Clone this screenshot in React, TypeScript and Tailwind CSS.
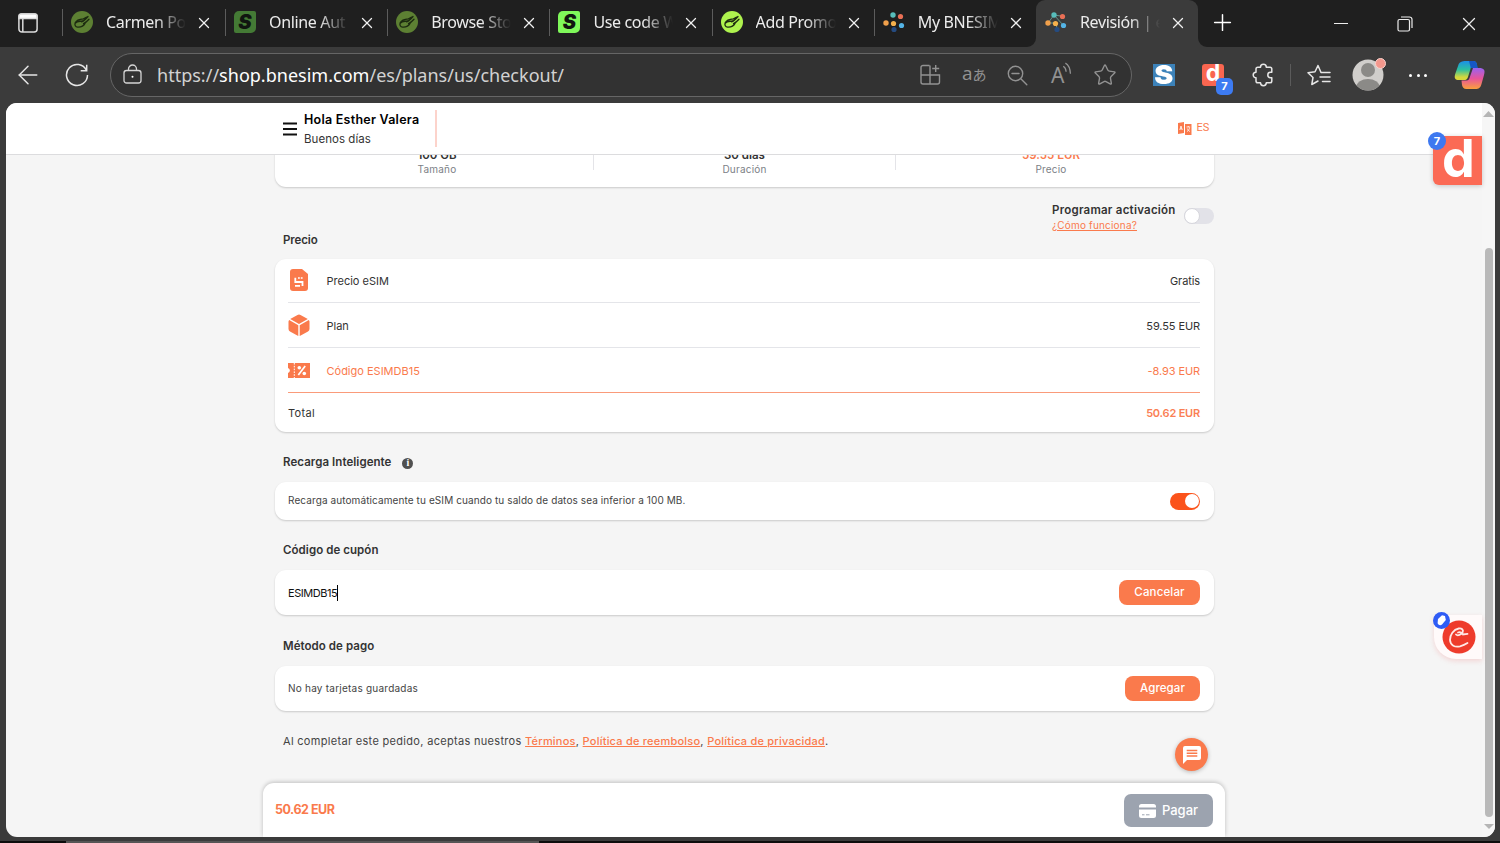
import type { ReactNode } from "react";
import { ArrowLeft, Plus, Star, X } from "lucide-react";

function LimeIcon({ color }: { color: string }) {
  return (
    <svg width="22" height="22" viewBox="0 0 22 22" fill="none" className="shrink-0">
      <circle cx="11" cy="11" r="11" fill={color} />
      <path
        d="M12.500 7.800c-3.800.3-7.200 1.400-8.300 3.900-.8 2.300.2 4.300 2.400 4.400 2.800.2 6.200-1.400 7.600-4M4.500 12c1.500-2 5-1.500 7-2.200M10.500 10.800c2.200-.6 4.200-2.600 6.500-5.300M12.500 12.500c2-.8 4-2.600 5.500-4.300M12.500 7.800l3.200-1.600"
        stroke="#1c2a10"
        strokeWidth="1.300"
        strokeLinecap="round"
      />
    </svg>
  );
}

function SIcon({ className }: { className: string }) {
  return (
    <span
      className={`flex h-[22px] w-[22px] shrink-0 items-center justify-center rounded-[2px] rounded-tl-[5px] rounded-br-[5px] font-['Inter',sans-serif] text-[20px] leading-none font-black text-[#101510] italic ${className}`}
    >
      S
    </span>
  );
}

function DotsIcon({ linked }: { linked?: boolean }) {
  return (
    <svg width="22" height="22" viewBox="0 0 22 22" className="shrink-0">
      {linked && (
        <path
          d="M9 4l9 1.300M9 4l-6 8h8M9 4l9.500 10.500M11 12l1 6"
          fill="none"
          stroke="#6fa7a0"
          strokeWidth="0.800"
        />
      )}
      <circle cx={linked ? 9 : 10} cy="4" r="2.700" fill="#57bdbb" />
      <circle cx="17.500" cy="5.500" r="2.600" fill="#e96f55" />
      <circle cx="3" cy="12" r="2.700" fill="#f0a04b" />
      <circle cx="10.500" cy="12.500" r="2.600" fill="#f5b04c" />
      <circle cx="18.500" cy="14.500" r="2.600" fill="#54b4e6" />
      <circle cx={linked ? 12 : 11} cy="18.500" r="2.600" fill="#254b80" />
    </svg>
  );
}

function Tab({
  icon,
  title,
  active,
}: {
  icon: ReactNode;
  title: string;
  active?: boolean;
}) {
  return (
    <div
      className={`relative flex h-[47px] w-[162.200px] shrink-0 items-center pb-[3px] first-of-type:w-[163px] ${active ? "rounded-t-[9px] bg-[#3b3b3b]" : ""}`}
    >
      {!active && <span className="-mr-px h-[27px] w-px bg-[#5c5c5c]" />}
      <span className="ml-[9px] flex">{icon}</span>
      <span className="ml-[13px] w-[80px] [mask-image:linear-gradient(to_right,black_62%,transparent)] text-[16px] tracking-[-0.350px] whitespace-nowrap text-[#ececec]">
        {title}
      </span>
      <X size={18} strokeWidth={1.700} className="mt-[2px] ml-[9px] shrink-0 text-[#f0f0f0]" />
      {active && (
        <>
          <svg width="9" height="9" className="absolute bottom-0 -left-[9px]">
            <path d="M9 0v9H0a9 9 0 0 0 9-9" fill="#3b3b3b" />
          </svg>
          <svg width="9" height="9" className="absolute -right-[9px] bottom-0">
            <path d="M0 0v9h9a9 9 0 0 1-9-9" fill="#3b3b3b" />
          </svg>
        </>
      )}
    </div>
  );
}

function TabStrip() {
  return (
    <div className="flex h-[47px] bg-[#1f1f1f]">
      <span className="flex w-[62px] items-center pl-[18px]">
        <svg width="20" height="20" viewBox="0 0 20 20" fill="none" stroke="#dcdcdc" strokeWidth="1.500" className="-mt-[2px]">
          <rect x="0.900" y="0.900" width="18.200" height="18.200" rx="3" />
          <path d="M1 3a2 2 0 0 1 2-2h14a2 2 0 0 1 2 2v2.500H1z" fill="#fff" />
          <path d="M4.800 6v13" />
        </svg>
      </span>
      <Tab icon={<LimeIcon color="#5d8033" />} title="Carmen Po" />
      <Tab icon={<SIcon className="bg-[#447a35]" />} title="Online Aut" />
      <Tab icon={<LimeIcon color="#5d8033" />} title="Browse Sto" />
      <Tab icon={<SIcon className="bg-[#7ff85a]" />} title="Use code W" />
      <Tab icon={<LimeIcon color="#aef24e" />} title="Add Promo" />
      <Tab icon={<DotsIcon />} title="My BNESIM" />
      <Tab icon={<DotsIcon linked />} title="Revisión | e" active />
      <Plus size={27} strokeWidth={1.300} className="mt-[9px] ml-[11px] text-white" />
      <div className="ml-auto flex items-center text-[#ededed]">
        <span className="mr-[49px] h-px w-[14px] bg-[#ededed]" />
        <svg width="16" height="16" viewBox="0 0 16 16" fill="none" stroke="currentColor" strokeWidth="1.200" className="mr-[45px]">
          <rect x="1" y="3.500" width="11.500" height="11.500" rx="1.500" />
          <path d="M4 1h8.500A2.500 2.500 0 0 1 15 3.500V12" />
        </svg>
        <X size={22} strokeWidth={1.400} className="mr-[20px]" />
      </div>
    </div>
  );
}

function AddressBar() {
  return (
    <div className="flex h-[44px] w-[1022px] items-center rounded-full border border-[#666] bg-[#323232] pr-[14px] pl-[12px] text-[#929292]">
      <svg width="19" height="20" viewBox="0 0 19 20" fill="none" stroke="#d5d5d5" strokeWidth="1.300" className="-mt-[2px]">
        <rect x="1" y="6.500" width="17" height="12.500" rx="2.500" />
        <path d="M5.500 6.500V5a4 4 0 0 1 8 0v1.500" />
        <circle cx="9.500" cy="12.700" r="1" fill="#fff" stroke="none" />
      </svg>
      <span className="ml-[15px] text-[18px] tracking-[0.010px] whitespace-nowrap text-[#d2d2d2]">
        https://<span className="text-white">shop.bnesim.com</span>/es/plans/us/checkout/
      </span>
      <div className="ml-auto flex items-center">
        <svg width="21" height="21" viewBox="0 0 21 21" fill="none" stroke="currentColor" strokeWidth="1.400" className="-mt-px">
          <path d="M9.500 1.500H3a2 2 0 0 0-2 2V18a2 2 0 0 0 2 2h14.500a2 2 0 0 0 2-2v-7H1M10 1.500V20M15.700 1v7M12.200 4.500h7" />
        </svg>
        <span className="-mt-[3px] ml-[21px] flex w-[24px] items-baseline font-['Open_Sans','Noto_Sans_CJK_JP',sans-serif]">
          <span className="text-[19px] leading-none">a</span>
          <span className="text-[14px] leading-none">あ</span>
        </span>
        <svg width="21" height="21" viewBox="0 0 21 21" fill="none" stroke="currentColor" strokeWidth="1.400" className="ml-[21px]">
          <circle cx="8.500" cy="8.500" r="7.200" />
          <path d="M13.800 13.800l6 6M5 8.500h7" strokeLinecap="round" />
        </svg>
        <span className="ml-[23px] flex w-[22px]">
          <span className="text-[21px] leading-[24px]">A</span>
          <svg width="10" height="14" viewBox="0 0 9 13" fill="none" stroke="currentColor" strokeWidth="1.200" className="-mt-px -ml-[2px] shrink-0">
            <path d="M1 4c1.700 1 2.500 2.500 2.700 5M3 1c3 1.700 4.500 5 4.700 10" />
          </svg>
        </span>
        <Star size={24} strokeWidth={1.400} className="ml-[20px]" />
      </div>
    </div>
  );
}

function Toolbar() {
  return (
    <div className="flex h-[56px] items-center bg-[#3b3b3b] text-[#e6e6e6]">
      <ArrowLeft size={30} strokeWidth={1.200} className="ml-[13px]" />
      <svg width="24" height="24" viewBox="0 0 24 24" fill="none" stroke="currentColor" strokeWidth="1.500" className="ml-[22px]">
        <path d="M21.500 7.500A10.500 10.500 0 1 0 22.500 12M21.700 1.800v6h-6" />
      </svg>
      <div className="ml-[21px]">
        <AddressBar />
      </div>
      <span className="ml-[21px] flex h-[22px] w-[22px] items-center justify-center bg-[#3c82b9] font-['Inter',sans-serif] text-[26px] leading-none font-black text-white">
        <span className="scale-x-110">S</span>
      </span>
      <span className="relative ml-[27px] flex h-[22px] w-[22px] items-center justify-center rounded-[3px] bg-[#f96650] pb-[3px] font-['Inter',sans-serif] text-[23px] leading-none font-bold text-white">
        d
        <span className="absolute top-[14px] left-[14px] flex h-[17px] w-[17px] items-center justify-center rounded-[5px] bg-[#3d7bf2] text-[11px] font-bold">
          7
        </span>
      </span>
      <svg width="22" height="24" viewBox="0 0 22 24" fill="none" stroke="currentColor" strokeWidth="1.500" strokeLinejoin="round" className="ml-[28px]">
        <path d="M8.500 4.200a2.900 2.900 0 0 1 5.800 0H18a1.800 1.800 0 0 1 1.800 1.800v3.300h-1.300a2.700 2.700 0 0 0 0 5.400h1.300V18a1.800 1.800 0 0 1-1.800 1.800h-3.700a2.900 2.900 0 0 1-5.800 0H5.800A1.800 1.800 0 0 1 4 18v-3.200a2.800 2.800 0 0 1 0-5.600V6a1.800 1.800 0 0 1 1.800-1.800z" />
      </svg>
      <span className="ml-[16px] h-[22px] w-px bg-[#5b5b5b]" />
      <svg width="24" height="22" viewBox="0 0 24 22" fill="none" stroke="currentColor" strokeWidth="1.500" strokeLinejoin="round" strokeLinecap="round" className="ml-[16px]">
        <path d="M14 8.500l-3-7-3 6.300-7 .9 5 4.800-1.200 7L11 17" />
        <path d="M14.500 8.500h8.500M13 13h10M15.500 17.500H23" />
      </svg>
      <span className="relative ml-[21px]">
        <svg width="32" height="32" viewBox="0 0 32 32">
          <clipPath id="avatar">
            <circle cx="16" cy="16" r="15.500" />
          </clipPath>
          <g clipPath="url(#avatar)">
            <rect width="32" height="32" fill="#d0cecb" />
            <circle cx="16" cy="11" r="7" fill="#8b8a87" />
            <ellipse cx="16" cy="27.500" rx="11.500" ry="7.500" fill="#8b8a87" />
          </g>
        </svg>
        <span className="absolute -top-px -right-[2px] h-[11px] w-[11px] rounded-full border border-[#fbd2cc] bg-[#f3978c]" />
      </span>
      <span className="ml-[25px] flex gap-[4.500px]">
        <i className="h-[3px] w-[3px] rounded-full bg-white" />
        <i className="h-[3px] w-[3px] rounded-full bg-white" />
        <i className="h-[3px] w-[3px] rounded-full bg-white" />
      </span>
      <svg width="32" height="30" viewBox="0 0 32 30" className="ml-[27px]">
        <defs>
          <linearGradient id="copilotLeft" x1="0" y1="0" x2="0" y2="1">
            <stop offset="0" stopColor="#1b8fe8" />
            <stop offset="0.450" stopColor="#2cc0a0" />
            <stop offset="0.850" stopColor="#d6d83c" />
          </linearGradient>
          <linearGradient id="copilotRight" x1="0" y1="0" x2="0" y2="1">
            <stop offset="0" stopColor="#9a62f0" />
            <stop offset="0.500" stopColor="#e8549b" />
            <stop offset="1" stopColor="#f9a03c" />
          </linearGradient>
        </defs>
        <path d="M19 8h6c5 0 6.500 2 5 7l-2.500 9c-1 4-3 5-6 5h-9c-3 0-4-2-4.500-4l-.5-4.500h5c2 0 2.600-1 3.200-3z" fill="url(#copilotRight)" />
        <path d="M12 1h7c3 0 3.700 2 4.200 4.500H20c-2 0-2.800 1-3.400 3L14 17c-.8 2.500-2 3-4 3H5c-4 0-5-2-3.800-6l3-8.500C5.200 2 8 1 12 1z" fill="url(#copilotLeft)" />
        <path d="M15 1h4c3 0 3.700 2 4.200 4.500l.8 2.500h-7.200z" fill="#1657c5" />
      </svg>
    </div>
  );
}

function SiteHeader() {
  return (
    <header className="relative flex h-[52px] shrink-0 border-b border-[#dcdcde] bg-white pl-[277px]">
      <svg width="14" height="14" viewBox="0 0 14 14" stroke="#111" strokeWidth="2.200" className="mt-[19px]">
        <path d="M0 1.500h14M0 7h14M0 12.500h14" />
      </svg>
      <div className="ml-[7px] w-[131px] pt-[7px]">
        <p className="text-[12.500px] leading-[19px] font-semibold tracking-[0.250px] whitespace-nowrap text-black">Hola Esther Valera</p>
        <p className="pt-px text-[11.500px] leading-[18px] tracking-[0.050px] text-[#333]">Buenos días</p>
      </div>
      <span className="mt-[7px] h-[37px] w-[1.500px] bg-[#fcd3cb]" />
      <div className="mt-[17px] ml-[741px] flex h-[16px] items-center gap-[5px] text-[#fa7a4c]">
        <svg width="14" height="13" viewBox="0 0 14 13">
          <path d="M0 1l6-1v11l-6 1zM7 2h6.500v11H7z" fill="currentColor" />
          <path d="M1.800 8L3 4l1.300 4M2.200 6.800h1.800M8.500 5h3.700M10.300 4v1M9 9.500c1.500-.8 2.300-2 2.500-4M9.300 6.500c.5 1.500 1.500 2.500 2.700 3" stroke="#fff" strokeWidth="0.800" fill="none" />
        </svg>
        <span className="pt-px font-['Roboto',sans-serif] text-[11px]">ES</span>
      </div>
    </header>
  );
}

function Card({ className, children }: { className: string; children: ReactNode }) {
  return (
    <div className={`w-[939px] shrink-0 rounded-[11px] bg-white shadow-[0_1px_2px_rgba(0,0,0,0.180)] ${className}`}>
      {children}
    </div>
  );
}

function Label({ children }: { children: ReactNode }) {
  return (
    <h2 className="flex h-[50px] shrink-0 items-center pt-[12px] pl-[8px] text-[11.500px] font-semibold tracking-[0.060px] text-[#333]">
      {children}
    </h2>
  );
}

function Stat({ value, name, className }: { value: string; name: string; className: string }) {
  return (
    <div className={`flex flex-col items-center ${className}`}>
      <span className="text-[11.500px] leading-[14px] font-semibold">{value}</span>
      <span className="text-[10px] leading-[14px] tracking-[0.200px] text-[#7c7f86]">{name}</span>
    </div>
  );
}

function PriceRow({
  icon,
  name,
  value,
  className,
}: {
  icon: ReactNode;
  name: string;
  value: string;
  className: string;
}) {
  return (
    <div className={`flex items-center border-b text-[11px] ${className}`}>
      <span className="flex w-[38.500px]">{icon}</span>
      <span className="pt-[2px]">{name}</span>
      <span className="ml-auto pt-[2px] tracking-[-0.100px]">{value}</span>
    </div>
  );
}

function SimIcon() {
  return (
    <svg width="22" height="22" viewBox="0 0 22 22" className="-mt-px">
      <path d="M5 0h9l6 5v14a3 3 0 0 1-3 3H5a3 3 0 0 1-3-3V3a3 3 0 0 1 3-3z" fill="#fa7a4c" />
      <path d="M7.300 8.800v4.200h7.200v4M7 16.800h5" stroke="#fff" strokeWidth="1.800" fill="none" />
      <path d="M10 9h5.500" stroke="#fff" strokeWidth="1.700" strokeDasharray="1.800 1" />
    </svg>
  );
}

function BoxIcon() {
  return (
    <svg width="22" height="22" viewBox="0 0 22 22" fill="#fa7a4c">
      <path d="M9.500.9a3 3 0 0 1 3 0l7.300 4.200L11 10 2.200 5.100z" />
      <path d="M1.200 6.100l9.100 5.100V22a3 3 0 0 1-1-.4L2 17.400A3 3 0 0 1 .5 15V7.500a3 3 0 0 1 .7-1.400z" />
      <path d="M20.800 6.100l-9.100 5.100V22a3 3 0 0 0 1-.4l7.300-4.200a3 3 0 0 0 1.500-2.400V7.500a3 3 0 0 0-.7-1.400z" />
    </svg>
  );
}

function CouponIcon() {
  return (
    <svg width="22" height="15" viewBox="0 0 22 15">
      <path d="M0 0h22v15H0V10a2.600 2.600 0 0 0 0-5z" fill="#fa7a4c" />
      <path d="M6.300 0v15" stroke="#fff" strokeDasharray="1.600 1.200" />
      <path d="M10.300 12L17.200 3" stroke="#fff" strokeWidth="1.700" />
      <circle cx="11.300" cy="4.700" r="1.800" fill="#fff" />
      <circle cx="16.300" cy="10.500" r="1.800" fill="#fff" />
    </svg>
  );
}

function Checkout() {
  return (
    <main className="flex min-h-0 flex-1 flex-col overflow-hidden pl-[269px]">
      <Card className="-mt-[20px] flex h-[52px] px-[6px] pt-[13px] text-[#333]">
        <Stat value="100 GB" name="Tamaño" className="w-[312px]" />
        <span className="h-[22px] w-px bg-[#e4e4e8]" />
        <Stat value="30 días" name="Duración" className="w-[301px]" />
        <span className="h-[22px] w-px bg-[#e4e4e8]" />
        <Stat value="59.55 EUR" name="Precio" className="w-[310px] text-[#fa7a4c]" />
      </Card>

      <div className="flex h-[72px] w-[939px] shrink-0 justify-between">
        <h2 className="self-end pb-[10px] pl-[8px] text-[11.500px] leading-[18px] font-semibold tracking-[-0.100px] text-[#333]">Precio</h2>
        <div className="flex pt-[15px]">
          <div className="w-[132px]">
            <p className="pt-px text-[11.500px] leading-[15px] font-semibold tracking-[0.240px] whitespace-nowrap text-[#333]">Programar activación</p>
            <p className="text-[10px] leading-[14px] tracking-[0.180px] text-[#fa7a4c] underline">¿Cómo funciona?</p>
          </div>
          <span className="mt-[6px] flex h-[16px] w-[30px] rounded-full bg-[#e2e2e8]">
            <i className="h-[16px] w-[16px] rounded-full border border-[#d6d6dc] bg-white" />
          </span>
        </div>
      </div>

      <Card className="h-[173px] pr-[14px] pl-[13px] text-[#333]">
        <PriceRow icon={<SimIcon />} name="Precio eSIM" value="Gratis" className="h-[44px] border-[#e4e5e9]" />
        <PriceRow icon={<BoxIcon />} name="Plan" value="59.55 EUR" className="h-[45px] border-[#e4e5e9]" />
        <PriceRow
          icon={<CouponIcon />}
          name="Código ESIMDB15"
          value="-8.93 EUR"
          className="h-[45px] border-[#fa9b7a] text-[#fa7a4c]"
        />
        <div className="flex h-[39px] items-center justify-between pt-[2px] text-[11px]">
          <span className="tracking-[0.350px]">Total</span>
          <span className="font-semibold tracking-[-0.200px] text-[#fa7f55]">50.62 EUR</span>
        </div>
      </Card>

      <Label>
        Recarga Inteligente
        <span className="ml-[11px] flex h-[11px] w-[11px] items-center justify-center rounded-full bg-[#505050] font-['Liberation_Serif',serif] text-[10px] leading-none font-bold text-white">
          i
        </span>
      </Label>
      <Card className="flex h-[38px] items-center justify-between px-[13px] pr-[14px]">
        <span className="pb-[2px] text-[10px] tracking-[0.100px] whitespace-nowrap text-[#444]">
          Recarga automáticamente tu eSIM cuando tu saldo de datos sea inferior a 100 MB.
        </span>
        <span className="flex h-[17px] w-[30px] justify-end rounded-full bg-[#fb531b] p-[1.500px]">
          <i className="h-[14px] w-[14px] rounded-full bg-white" />
        </span>
      </Card>

      <Label>Código de cupón</Label>
      <Card className="flex h-[45px] items-center justify-between px-[13px] pr-[14px]">
        <span className="flex items-center pt-px text-[11px] tracking-[-0.450px] text-[#111]">
          ESIMDB15
          <i className="h-[16px] w-px bg-black" />
        </span>
        <button className="h-[25px] w-[81px] rounded-[8px] bg-[#fa7a4c] pt-px text-[11.500px] font-medium tracking-[0.150px] text-white">Cancelar</button>
      </Card>

      <Label>
        <span className="pt-px">Método de pago</span>
      </Label>
      <Card className="mt-px flex h-[45px] items-center justify-between px-[13px] pr-[14px]">
        <span className="text-[10px] tracking-[0.230px] text-[#444]">No hay tarjetas guardadas</span>
        <button className="h-[25px] w-[75px] rounded-[8px] bg-[#fa7a4c] pt-px text-[11.500px] font-medium tracking-[0.100px] text-white">Agregar</button>
      </Card>

      <p className="mt-[21px] shrink-0 pl-[8px] text-[11px] leading-[18px] tracking-[0.310px] text-[#444]">
        Al completar este pedido, aceptas nuestros{" "}
        <a className="font-medium tracking-[0.220px] text-[#fa7a4c] underline">Términos</a>,{" "}
        <a className="font-medium tracking-[0.220px] text-[#fa7a4c] underline">Política de reembolso</a>,{" "}
        <a className="font-medium tracking-[0.220px] text-[#fa7a4c] underline">Política de privacidad</a>.
      </p>
    </main>
  );
}

function PayBar() {
  return (
    <footer className="ml-[257px] flex h-[54px] w-[962px] shrink-0 justify-between rounded-t-[11px] bg-white px-[12px] shadow-[0_-1px_4px_rgba(0,0,0,0.220)]">
      <span className="pt-[17px] text-[12.500px] leading-[20px] font-bold tracking-[-0.480px] text-[#fa7a4c]">50.62 EUR</span>
      <button className="mt-[11px] flex h-[33px] w-[89px] items-center justify-center gap-[6px] rounded-[7px] bg-[#9ca3af] text-[13px] font-medium text-white">
        <svg width="17" height="14" viewBox="0 0 17 14">
          <path d="M0 3.500V2.500A2.500 2.500 0 0 1 2.500 0h12A2.500 2.500 0 0 1 17 2.500v1zM0 5.500h17v6a2.500 2.500 0 0 1-2.500 2.500h-12A2.500 2.500 0 0 1 0 11.500z" fill="#fff" />
          <path d="M3 10.800h2.500M7 10.800h3.500" stroke="#9ca3af" />
        </svg>
        Pagar
      </button>
    </footer>
  );
}

function Scrollbar() {
  return (
    <div className="flex w-[13px] flex-col items-center bg-[#f6f6f6]">
      <svg width="11" height="6" viewBox="0 0 11 6" className="mt-[8px]">
        <path d="M5.500 0L11 6H0z" fill="#b5b5b5" />
      </svg>
      <span className="mt-[131px] h-[569px] w-[8px] rounded-full bg-[#b9b9b9]" />
      <svg width="10" height="5" viewBox="0 0 10 5" className="mt-[7px]">
        <path d="M0 0h10L5 5z" fill="#b5b5b5" />
      </svg>
    </div>
  );
}

function FloatingButtons() {
  return (
    <>
      <div className="absolute top-[33px] right-[13px] flex h-[49px] w-[49px] items-center justify-center rounded-l-[6px] bg-[#fb6a55] pb-[4px] pl-[2px] font-['Inter',sans-serif] text-[52px] leading-none font-bold text-white shadow-[0_1px_5px_rgba(0,0,0,0.200)]">
        d
        <span className="absolute -top-[4px] -left-[5px] flex h-[18px] w-[18px] items-center justify-center rounded-full bg-[#3d78f0] text-[11px]">
          7
        </span>
      </div>
      <div className="absolute top-[512px] right-[13px] flex h-[44px] w-[48px] items-center rounded-bl-[22px] bg-[#fffafa] pl-[8px] shadow-[0_2px_5px_rgba(240,120,120,0.250)]">
        <svg width="34" height="34" viewBox="0 0 34 34" fill="none" className="-mt-px">
          <circle cx="17" cy="17" r="16.500" fill="#ee3b2b" />
          <path
            d="M14 14.500c1.500 1.800 5.500.2 6.700-2.300 1-2.400-1-4.300-4-3.700C11.500 9.500 7.800 15 8 20c.4 5.500 5 7.500 10 6.300 3-.8 5.500-2 7.500-3.300M16 12.500c2.500-.8 4.500.5 5 2l4.500-.6"
            stroke="#ffe9e6"
            strokeWidth="1.800"
            strokeLinecap="round"
          />
        </svg>
        <svg width="17" height="17" viewBox="0 0 17 17" className="absolute -top-[3px] -left-px">
          <circle cx="8.500" cy="8.500" r="8.500" fill="#2f5cf5" />
          <path d="M5 7l4-3.700 3 .6.800 4-3.800 4.600c-1.500 1.300-4 .7-4.400-1.400z" fill="#fff" />
        </svg>
      </div>
      <div className="absolute top-[635px] left-[1169px] flex h-[33px] w-[33px] items-center justify-center rounded-full bg-[#fa7a4c] shadow-[0_1px_4px_rgba(0,0,0,0.250)]">
        <svg width="18" height="18" viewBox="0 0 18 18">
          <path d="M2 0h14a2 2 0 0 1 2 2v10a2 2 0 0 1-2 2H4l-4 4V2a2 2 0 0 1 2-2z" fill="#fff" />
          <path d="M3.700 4.400h10.600M3.700 7.200h10.600M3.700 10h10.600" stroke="#fa7a4c" strokeWidth="1.500" />
        </svg>
      </div>
    </>
  );
}

export default function App() {
  return (
    <div className="flex h-[843px] w-[1500px] flex-col overflow-hidden bg-[#3b3b3b] font-['Noto_Sans',sans-serif]">
      <TabStrip />
      <Toolbar />
      <div className="relative ml-[6px] flex h-[734px] w-[1489px] overflow-hidden rounded-[11px] bg-[#f5f5f5] font-['Inter',sans-serif]">
        <div className="flex w-[1476px] flex-col">
          <SiteHeader />
          <Checkout />
          <PayBar />
        </div>
        <Scrollbar />
        <FloatingButtons />
      </div>
      <div className="mt-auto flex h-[2px] bg-[#0c0c0c]">
        <span className="ml-[66px] w-[473px] bg-[#555]" />
      </div>
    </div>
  );
}
